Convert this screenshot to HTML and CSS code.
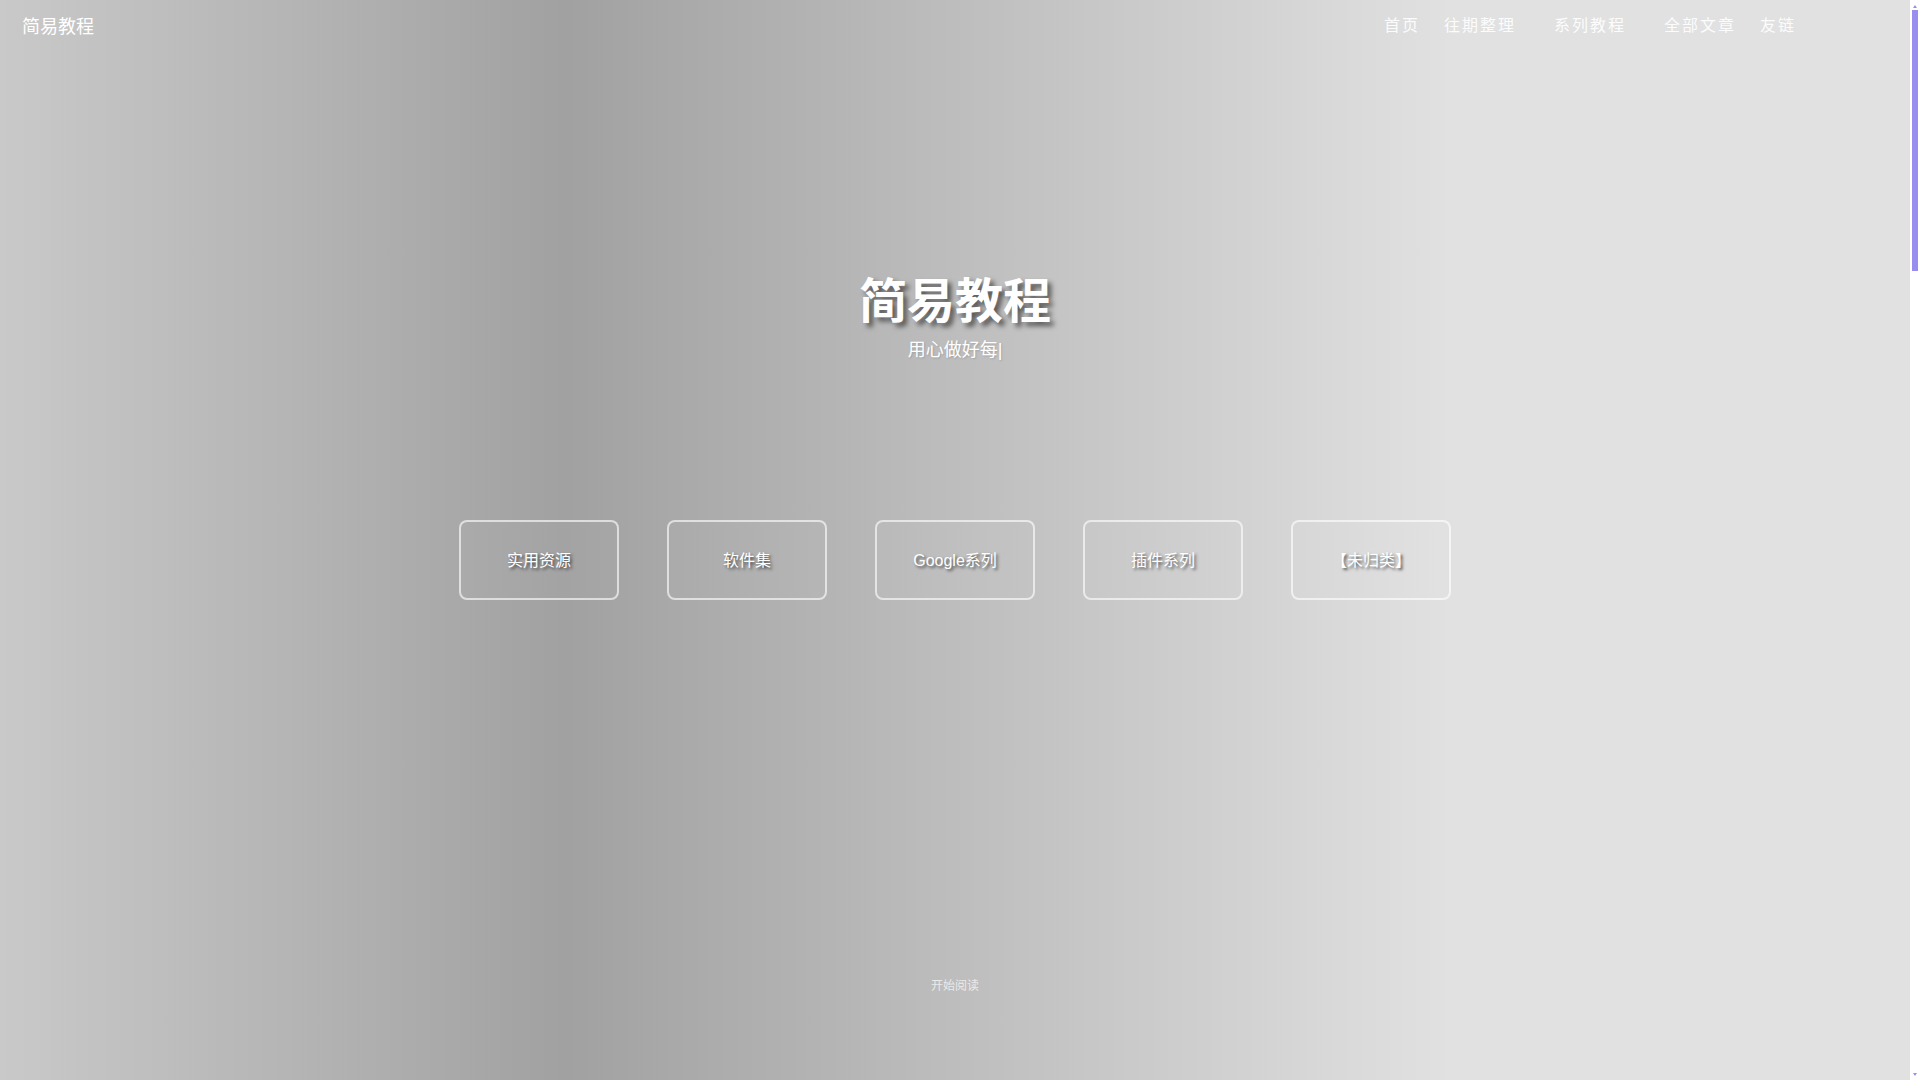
FILE: index.html
```html
<!DOCTYPE html>
<html lang="zh-CN">
<head>
<meta charset="utf-8">
<title>简易教程</title>
<link rel="stylesheet" href="styles.css">
</head>
<body>
<section class="hero">
  <header class="topbar">
    <a class="brand" href="#">简易教程</a>
    <nav class="menu">
      <a class="menu-item" href="#">首页</a>
      <a class="menu-item has-sub" href="#">往期整理</a>
      <a class="menu-item has-sub" href="#">系列教程</a>
      <a class="menu-item" href="#">全部文章</a>
      <a class="menu-item" href="#">友链</a>
    </nav>
  </header>
  <div class="hero-body">
    <h1 class="hero-title">简易教程</h1>
    <p class="hero-sub">用心做好每<span class="cursor">|</span></p>
    <div class="cats">
      <a class="cat" href="#">实用资源</a>
      <a class="cat" href="#">软件集</a>
      <a class="cat" href="#">Google系列</a>
      <a class="cat" href="#">插件系列</a>
      <a class="cat" href="#">【未归类】</a>
    </div>
    <a class="start" href="#">开始阅读</a>
  </div>
</section>
<div class="scrollbar" aria-hidden="true">
  <span class="sb-up"></span>
  <span class="sb-thumb"></span>
  <span class="sb-rest"></span>
  <span class="sb-down"></span>
</div>
</body>
</html>
```

FILE: styles.css
```css
html {
  margin: 0;
  padding: 0;
}
body {
  margin: 0;
  padding-right: 10px;
  font-family: "Liberation Sans", "Noto Sans CJK SC", sans-serif;
  color: #ffffff;
  background: #ffffff;
}
a {
  color: inherit;
  text-decoration: none;
}
.hero {
  height: 1080px;
  display: flex;
  flex-direction: column;
  background: linear-gradient(to right, #c9c9c9 0%, #a1a1a1 29.6%, #e1e1e1 76%, #e1e1e1 100%);
}
.topbar {
  height: 52px;
  display: flex;
  align-items: center;
  justify-content: space-between;
  padding: 0 0 0 22px;
}
.brand {
  font-size: 18px;
  line-height: 24px;
  margin-top: 2px;
}
.menu {
  display: flex;
  align-items: center;
  margin-right: 114px;
}
.menu-item {
  font-size: 16px;
  line-height: 20px;
  letter-spacing: 2px;
  margin-left: 24px;
  color: rgba(255, 255, 255, 0.92);
}
.menu-item:first-child {
  margin-left: 0;
}
.menu-item.has-sub {
  padding-right: 14px;
}
.hero-body {
  display: flex;
  flex-direction: column;
  align-items: center;
}
.hero-title {
  margin: 221px 0 0;
  font-size: 48px;
  line-height: 58px;
  font-weight: bold;
  text-shadow: 4px 4px 5px rgba(0, 0, 0, 0.55);
}
.hero-sub {
  margin: 6px 0 0;
  font-size: 18px;
  line-height: 27px;
  text-shadow: 1px 1px 2px rgba(0, 0, 0, 0.15);
}
.cats {
  display: flex;
  gap: 48px;
  margin-top: 156px;
}
.cat {
  box-sizing: border-box;
  width: 160px;
  height: 80px;
  padding-bottom: 3px;
  border: 2px solid rgba(255, 255, 255, 0.62);
  border-radius: 8px;
  display: flex;
  align-items: center;
  justify-content: center;
  font-size: 16px;
  text-shadow: 2px 2px 3px rgba(0, 0, 0, 0.6);
  background: rgba(255, 255, 255, 0.03);
}
.start {
  margin-top: 377px;
  font-size: 12px;
  line-height: 18px;
  color: rgba(255, 255, 255, 0.7);
}

/* fake classic scrollbar drawn over the right edge */
.scrollbar {
  position: fixed;
  top: 0;
  right: 0;
  width: 10px;
  height: 100vh;
  background: #ffffff;
  display: flex;
  flex-direction: column;
  align-items: center;
}
.sb-up,
.sb-down {
  height: 10px;
  width: 10px;
  display: flex;
  justify-content: center;
  flex: none;
}
.sb-up::before {
  content: "";
  margin-top: 5px;
  width: 0;
  height: 0;
  border-left: 2.5px solid transparent;
  border-right: 2.5px solid transparent;
  border-bottom: 3px solid #998df0;
}
.sb-down::before {
  content: "";
  margin-top: 3px;
  width: 0;
  height: 0;
  border-left: 2.5px solid transparent;
  border-right: 2.5px solid transparent;
  border-top: 3px solid #998df0;
}
.sb-thumb {
  width: 6px;
  height: 261px;
  background: #998df0;
  flex: none;
}
.sb-rest {
  flex: 1;
}
```
